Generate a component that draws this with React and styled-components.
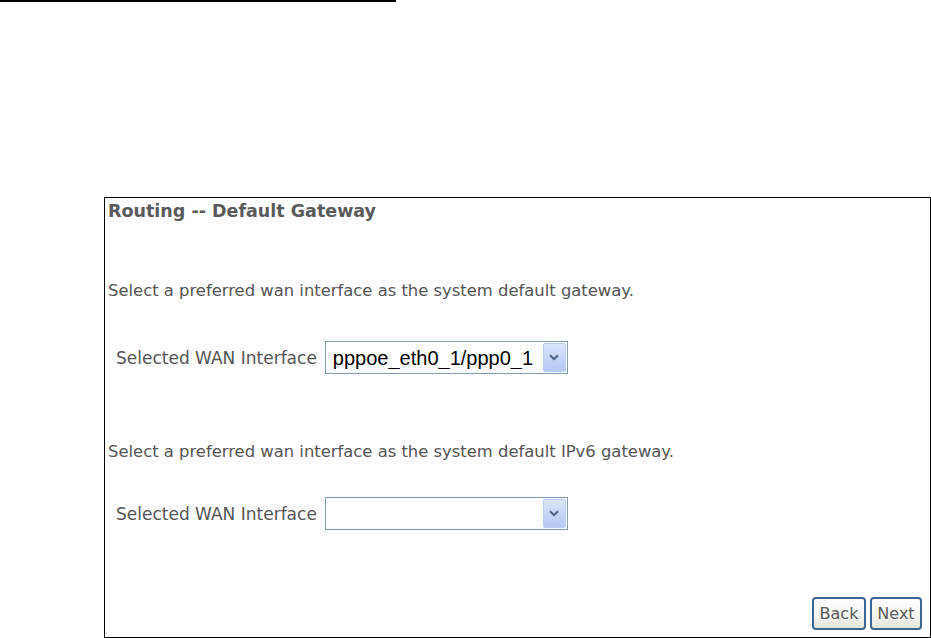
import styled, { createGlobalStyle } from "styled-components";

const GlobalStyle = createGlobalStyle`
  html, body {
    margin: 0;
    padding: 0;
    background: #ffffff;
  }
  body {
    font-family: "DejaVu Sans", "Liberation Sans", sans-serif;
    color: #555555;
  }
`;

const TopRule = styled.div`
  width: 396px;
  height: 2px;
  background: #000000;
`;

const Panel = styled.form`
  box-sizing: border-box;
  width: 827px;
  height: 441px;
  margin: 195px 0 0 104px;
  padding: 3px 8px 7px 3px;
  border: 1px solid #000000;
  display: flex;
  flex-direction: column;
`;

const Title = styled.div`
  font-size: 17.5px;
  font-weight: bold;
  line-height: 20px;
  color: #5a5a5a;
`;

const Text = styled.p`
  margin: ${(p) => p.$top}px 0 0;
  font-size: 16.4px;
  line-height: 20px;
  color: #555555;
`;

const Row = styled.div`
  display: flex;
  align-items: center;
  gap: 8px;
  margin-top: ${(p) => p.$top}px;
  padding-left: 8px;
`;

const Label = styled.label`
  font-size: 17px;
  line-height: 20px;
  color: #555555;
`;

const SelectBox = styled.div`
  box-sizing: border-box;
  width: 243px;
  height: 33px;
  display: flex;
  align-items: stretch;
  border: 1px solid #7f9db9;
  background: #ffffff;
  padding: 1px;
`;

const Select = styled.select`
  flex: 1;
  min-width: 0;
  appearance: none;
  border: none;
  outline: none;
  background: transparent;
  padding: 0 0 0 6px;
  font-family: "Liberation Sans", Arial, sans-serif;
  font-size: 20px;
  color: #000000;
`;

const ArrowButton = styled.span`
  width: 21px;
  display: flex;
  align-items: center;
  justify-content: center;
  border-radius: 2px;
  border: 1px solid #bccdf3;
  background: linear-gradient(180deg, #dbe6fb 0%, #c3d4f7 55%, #b5c9f4 100%);
`;

const Actions = styled.div`
  margin-top: auto;
  display: flex;
  justify-content: flex-end;
  gap: 4px;
`;

const Button = styled.button`
  box-sizing: border-box;
  width: ${(p) => p.$w}px;
  height: 33px;
  padding: 0;
  border: 2px solid #3c6694;
  border-radius: 4px;
  background: linear-gradient(180deg, #ffffff 0%, #f4f4f0 60%, #e3e3dc 100%);
  font-family: "DejaVu Sans", "Liberation Sans", sans-serif;
  font-size: 16px;
  color: #5a5a5a;
`;

function Chevron() {
  return (
    <svg width="10" height="7" viewBox="0 0 10 7">
      <path d="M1 1.2 L5 5 L9 1.2" fill="none" stroke="#4d6185" strokeWidth="2" />
    </svg>
  );
}

function WanSelect({ id, value, options }) {
  return (
    <SelectBox>
      <Select id={id} defaultValue={value}>
        {options.map((o) => (
          <option key={o} value={o}>
            {o}
          </option>
        ))}
      </Select>
      <ArrowButton>
        <Chevron />
      </ArrowButton>
    </SelectBox>
  );
}

export default function App() {
  return (
    <>
      <GlobalStyle />
      <TopRule />
      <Panel onSubmit={(e) => e.preventDefault()}>
        <Title>Routing -- Default Gateway</Title>
        <Text $top={60}>
          Select a preferred wan interface as the system default gateway.
        </Text>
        <Row $top={40}>
          <Label htmlFor="wan4">Selected WAN Interface</Label>
          <WanSelect id="wan4" value="pppoe_eth0_1/ppp0_1" options={["pppoe_eth0_1/ppp0_1"]} />
        </Row>
        <Text $top={68}>
          Select a preferred wan interface as the system default IPv6 gateway.
        </Text>
        <Row $top={35}>
          <Label htmlFor="wan6">Selected WAN Interface</Label>
          <WanSelect id="wan6" value="" options={[""]} />
        </Row>
        <Actions>
          <Button type="button" $w={54}>Back</Button>
          <Button type="button" $w={52}>Next</Button>
        </Actions>
      </Panel>
    </>
  );
}
